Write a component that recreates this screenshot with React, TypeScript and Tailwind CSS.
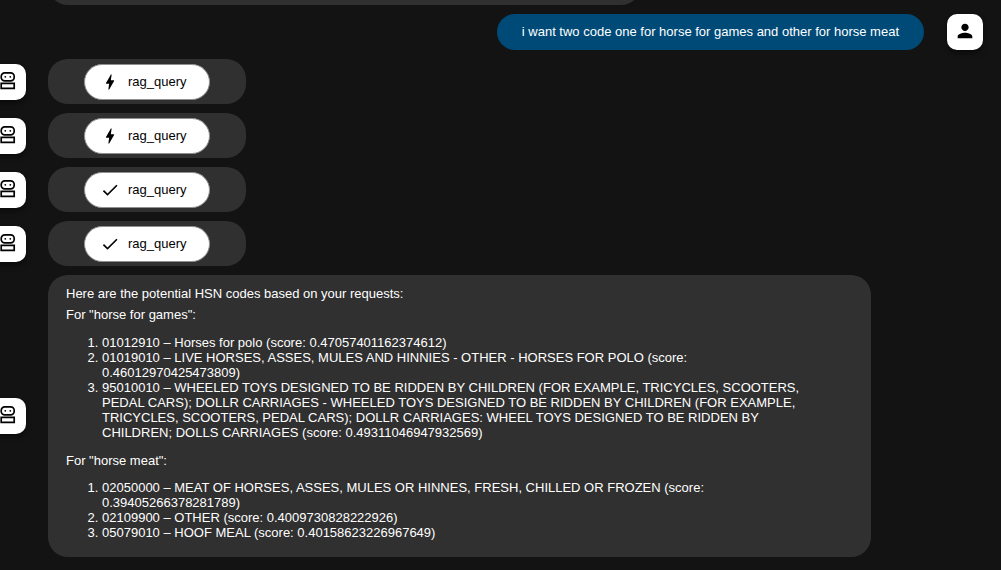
import type { ReactNode } from "react";
import { MdBolt, MdCheck, MdPerson } from "react-icons/md";

const calls = [
  { id: 1, done: false },
  { id: 2, done: false },
  { id: 3, done: true },
  { id: 4, done: true },
];

const gameCodes = [
  "01012910 – Horses for polo (score: 0.47057401162374612)",
  "01019010 – LIVE HORSES, ASSES, MULES AND HINNIES - OTHER - HORSES FOR POLO (score: 0.46012970425473809)",
  "95010010 – WHEELED TOYS DESIGNED TO BE RIDDEN BY CHILDREN (FOR EXAMPLE, TRICYCLES, SCOOTERS, PEDAL CARS); DOLLR CARRIAGES - WHEELED TOYS DESIGNED TO BE RIDDEN BY CHILDREN (FOR EXAMPLE, TRICYCLES, SCOOTERS, PEDAL CARS); DOLLR CARRIAGES: WHEEL TOYS DESIGNED TO BE RIDDEN BY CHILDREN; DOLLS CARRIAGES (score: 0.49311046947932569)",
];

const meatCodes = [
  "02050000 – MEAT OF HORSES, ASSES, MULES OR HINNES, FRESH, CHILLED OR FROZEN (score: 0.39405266378281789)",
  "02109900 – OTHER (score: 0.4009730828222926)",
  "05079010 – HOOF MEAL (score: 0.40158623226967649)",
];

function RobotIcon() {
  return (
    <svg viewBox="0 0 20 20" className="size-5" fill="none" stroke="currentColor" strokeWidth="1.7" aria-hidden="true">
      <rect x="3.2" y="0.9" width="13" height="8" rx="3.6" />
      <path d="M3.2 16.3v-4.9h13v4.9z" />
      <circle cx="7.3" cy="4.8" r="0.9" fill="currentColor" stroke="none" />
      <circle cx="12.3" cy="4.8" r="0.9" fill="currentColor" stroke="none" />
    </svg>
  );
}

function Avatar({ children }: { children: ReactNode }) {
  return (
    <div className="flex size-9 shrink-0 items-center justify-center rounded-[10px] bg-white text-black shadow-md shadow-black/40">
      {children}
    </div>
  );
}

function BotRow({ children }: { children: ReactNode }) {
  return (
    <div className="-ml-2.5 flex items-center gap-[22px]">
      <Avatar>
        <RobotIcon />
      </Avatar>
      {children}
    </div>
  );
}

function CodeList({ items }: { items: string[] }) {
  return (
    <ol className="list-decimal pl-9 pr-10">
      {items.map((item) => (
        <li key={item}>{item}</li>
      ))}
    </ol>
  );
}

export default function App() {
  return (
    <main className="flex min-h-screen flex-col gap-[9px] overflow-hidden bg-[#131313] font-['Liberation_Sans',Arial,sans-serif] text-[13px] leading-[15px] text-white">
      <div className="ml-12 mr-90 h-[5px] overflow-hidden">
        <div className="-mt-10 h-[45px] rounded-[20px] bg-[#303030]" />
      </div>

      <div className="flex items-center justify-end gap-[23px] pr-[18px]">
        <p className="rounded-[20px] bg-[#004a77] px-[25px] pb-[11px] pt-[10px]">
          i want two code one for horse for games and other for horse meat
        </p>
        <Avatar>
          <MdPerson className="mb-0.5 size-[22px]" aria-hidden="true" />
        </Avatar>
      </div>

      {calls.map((call) => (
        <BotRow key={call.id}>
          <div className="flex h-[45px] items-center rounded-[20px] bg-[#303030] px-9">
            <button
              type="button"
              className="flex h-9 items-center gap-2 rounded-full border border-[#8e918f] bg-white pl-[15px] pr-[22px] text-black"
            >
              {call.done ? (
                <MdCheck className="size-5" aria-hidden="true" />
              ) : (
                <MdBolt className="size-5" aria-hidden="true" />
              )}
              rag_query
            </button>
          </div>
        </BotRow>
      ))}

      <BotRow>
        <div className="mr-[130px] flex-1 rounded-[20px] bg-[#303030] px-[18px] pb-[17px] pt-[11px]">
          <p className="mb-1.5">Here are the potential HSN codes based on your requests:</p>
          <p className="mb-[13px]">For "horse for games":</p>
          <CodeList items={gameCodes} />
          <p className="mb-3 mt-[13px]">For "horse meat":</p>
          <CodeList items={meatCodes} />
        </div>
      </BotRow>
    </main>
  );
}
